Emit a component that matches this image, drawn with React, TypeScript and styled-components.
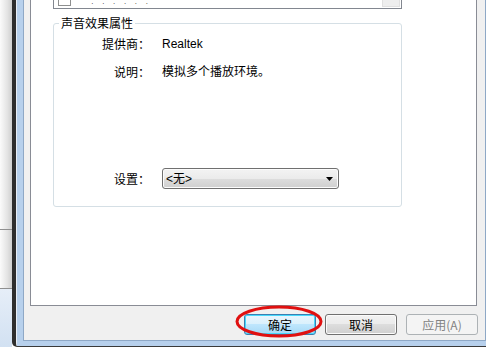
import React from "react";
import styled, { createGlobalStyle } from "styled-components";

const GlobalStyle = createGlobalStyle`
  html, body { margin: 0; padding: 0; background: #ffffff; }
  body {
    font-family: "Liberation Sans", "Noto Sans CJK SC", sans-serif;
    font-size: 12px;
    color: #000;
  }
`;

const Screen = styled.div`
  width: 486px;
  height: 347px;
  display: flex;
  overflow: hidden;
`;

const Backdrop = styled.div`
  width: 12px;
  display: flex;
  flex-direction: column;
`;

const BackdropPane = styled.div<{ $h?: number }>`
  height: ${(p) => (p.$h ? `${p.$h}px` : "auto")};
  flex: ${(p) => (p.$h ? "none" : "1")};
  background: linear-gradient(to right, #fbfbfb, #e4e4e4 60%, #cfcfcf);
`;

const BackdropLine = styled.div`
  height: 1px;
  background: #8f8f8f;
`;

const BackdropTaskbar = styled.div`
  flex: 1;
  background: linear-gradient(to bottom, #e6eef8, #d2e1f2);
`;

const Window = styled.div`
  flex: 1;
  display: flex;
  border-left: 4px solid #2e2e2e;
  border-bottom: 1px solid #3a3a3a;
  border-bottom-left-radius: 5px;
  padding: 0 0 5px 7px;
  background: linear-gradient(to right, #e9eef5 1px, #b7d0ec 1px);
`;

const Client = styled.div`
  flex: 1;
  display: flex;
  flex-direction: column;
  background: #f0f0f0;
  border-left: 1px solid #8ea8c6;
  border-right: 1px solid #8ea8c6;
  border-bottom: 1px solid #8ea8c6;
  padding: 0 8px 5px 6px;
`;

const TabPanel = styled.div`
  height: 305px;
  background: #ffffff;
  border: 1px solid #898c95;
  border-top: none;
  padding-left: 22px;
  display: flex;
  flex-direction: column;
  align-items: flex-start;
`;

const ListBox = styled.div`
  width: 347px;
  height: 8px;
  border: 1px solid #828790;
  border-top: none;
  display: flex;
  align-items: flex-end;
  overflow: hidden;
`;

const CheckFragment = styled.div`
  width: 11px;
  height: 13px;
  margin: 0 0 2px 4px;
  border: 1px solid #8e8f8f;
  border-top: none;
  flex: none;
`;

const ClippedText = styled.span`
  margin: 0 0 1px 20px;
  font-size: 8px;
  line-height: 6px;
  color: #333;
  letter-spacing: 3px;
`;

const ScrollFragment = styled.div`
  width: 16px;
  height: 6px;
  margin: 0 1px 2px auto;
  align-self: flex-start;
  background: #eeeeee;
  border: 1px solid #e0e0e0;
  border-top: none;
`;

const GroupBox = styled.fieldset`
  width: 349px;
  box-sizing: border-box;
  margin: 7px 0 0 0;
  padding: 7px 0 17px 0;
  border: 1px solid #d5dfe5;
  border-radius: 3px;
  min-inline-size: auto;
`;

const Legend = styled.legend`
  margin-left: 5px;
  padding: 0 2px;
  font-family: "Noto Sans CJK SC", sans-serif;
  font-size: 12px;
  line-height: 14px;
  color: #000;
`;

const Row = styled.div<{ $top: number; $h: number }>`
  display: grid;
  grid-template-columns: 96px 1fr;
  column-gap: 12px;
  align-items: center;
  height: ${(p) => p.$h}px;
  margin-top: ${(p) => p.$top}px;
`;

const Label = styled.span`
  text-align: right;
  font-family: "Noto Sans CJK SC", sans-serif;
  line-height: 14px;
  white-space: nowrap;
`;

const Value = styled.span`
  font-family: "Liberation Sans", "Noto Sans CJK SC", sans-serif;
  line-height: 14px;
  white-space: nowrap;
`;

const Select = styled.div`
  width: 177px;
  height: 21px;
  box-sizing: border-box;
  border: 1px solid #707070;
  border-radius: 3px;
  background: linear-gradient(to bottom, #f3f3f3 0%, #ebebeb 50%, #dddddd 50%, #cfcfcf 100%);
  display: flex;
  align-items: center;
  padding: 0 4px 0 3px;
  box-shadow: inset 0 0 0 1px #fcfcfc;
`;

const SelectText = styled.span`
  flex: 1;
  line-height: 14px;
`;

const Arrow = styled.svg`
  width: 7px;
  height: 4px;
  margin-right: 1px;
`;

const ButtonBar = styled.div`
  margin: 8px -1px 0 0;
  display: flex;
  justify-content: flex-end;
  gap: 9px;
`;

const ButtonWrap = styled.div`
  position: relative;
`;

const Button = styled.button<{ $variant?: "default" | "normal" | "disabled" }>`
  width: 72px;
  height: 21px;
  padding: 0;
  box-sizing: border-box;
  font-family: "Noto Sans CJK SC", sans-serif;
  font-size: 12px;
  line-height: 14px;
  border-radius: 3px;
  border: 1px solid
    ${(p) =>
      p.$variant === "default" ? "#3c7fb1" : p.$variant === "disabled" ? "#adb2b5" : "#707070"};
  color: ${(p) => (p.$variant === "disabled" ? "#838383" : "#000")};
  background: ${(p) =>
    p.$variant === "disabled"
      ? "#f4f4f4"
      : p.$variant === "default"
      ? "linear-gradient(to bottom, #eaf6fd 0%, #d9f0fc 50%, #bee6fd 50%, #a7d9f5 100%)"
      : "linear-gradient(to bottom, #f2f2f2 0%, #ebebeb 50%, #dddddd 50%, #cfcfcf 100%)"};
  box-shadow: ${(p) =>
    p.$variant === "default" ? "inset 0 0 0 1px #48d8fb" : p.$variant === "disabled" ? "none" : "inset 0 0 0 1px #fbfbfb"};
`;

const Circle = styled.svg`
  position: absolute;
  left: -9px;
  top: -9px;
  width: 88px;
  height: 33px;
  pointer-events: none;
  overflow: visible;
`;

export default function App() {
  return (
    <>
      <GlobalStyle />
      <Screen>
        <Backdrop>
          <BackdropPane $h={229} />
          <BackdropLine />
          <BackdropPane />
          <BackdropLine />
          <BackdropTaskbar />
        </Backdrop>
        <Window>
          <Client>
            <TabPanel>
              <ListBox>
                <CheckFragment />
                <ClippedText>· · · · · ·</ClippedText>
                <ScrollFragment />
              </ListBox>
              <GroupBox>
                <Legend>声音效果属性</Legend>
                <Row $top={0} $h={14}>
                  <Label>提供商：</Label>
                  <Value>Realtek</Value>
                </Row>
                <Row $top={14} $h={14}>
                  <Label>说明：</Label>
                  <Value>模拟多个播放环境。</Value>
                </Row>
                <Row $top={89} $h={21}>
                  <Label>设置：</Label>
                  <Select>
                    <SelectText>&lt;无&gt;</SelectText>
                    <Arrow viewBox="0 0 7 4">
                      <path d="M0 0 H7 L3.5 4 Z" fill="#000" />
                    </Arrow>
                  </Select>
                </Row>
              </GroupBox>
            </TabPanel>
            <ButtonBar>
              <ButtonWrap>
                <Button $variant="default">确定</Button>
                <Circle viewBox="0 0 88 33">
                  <ellipse cx="44" cy="16.5" rx="42" ry="14.5" fill="none" stroke="#e01010" strokeWidth="3" />
                </Circle>
              </ButtonWrap>
              <Button $variant="normal">取消</Button>
              <Button $variant="disabled">应用(A)</Button>
            </ButtonBar>
          </Client>
        </Window>
      </Screen>
    </>
  );
}
